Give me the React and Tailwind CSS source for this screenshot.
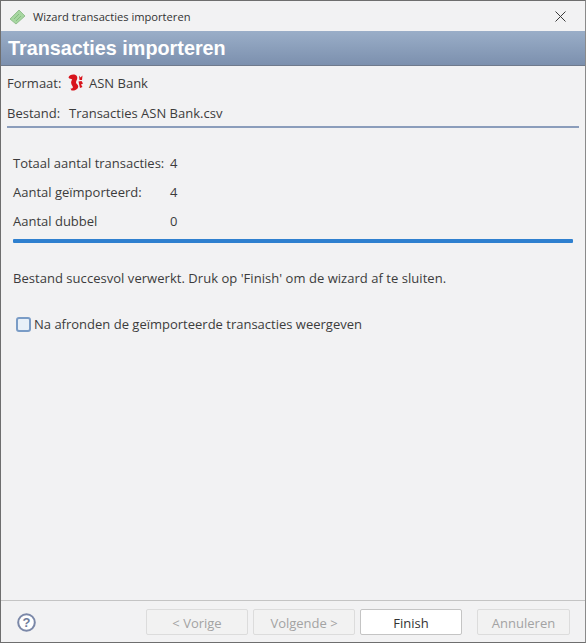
const font = { fontFamily: '"Open Sans", "Noto Sans", sans-serif' };

function WizardIcon() {
  return (
    <svg width="17" height="16" viewBox="0 0 17 16" className="shrink-0">
      <path d="M1 10 L10 1 L16 7 L7 15 Z" fill="#a6d6a0" stroke="#86b583" strokeWidth="0.8" />
      <path d="M5 10 L10 5 M7 12 L12 7" stroke="#7db67a" strokeWidth="0.8" />
    </svg>
  );
}

function SquirrelIcon() {
  return (
    <svg width="16" height="17" viewBox="0 0 16 17" className="shrink-0">
      <path d="M0.5 3.5 C1 0.5 7.5 -0.8 9 2.5 C10 5 8 6.5 8 8.5 C8.2 10 10 10.2 10.2 12.3 C10.4 15 7 17.2 3.5 16.4 L2.5 14.6 C4.5 14.8 5.6 13.5 4.4 12 C2.8 10 2.6 7.5 4.2 5.4 C3 4.6 1.5 5.4 0.5 3.5 Z" fill="#d8141c" />
      <path d="M11 1.5 L12.5 3.5 L14.5 1.5 L14 6 L11.5 6 Z M10.5 7.5 L13.5 7 L15 9.5 L13 10.5 L14.5 13 L12 14 Z" fill="#d8141c" />
    </svg>
  );
}

function WizardButton({ children, primary, wide }) {
  return (
    <button
      className={
        (wide ? "w-[102px] " : "w-[93px] ") +
        (primary
          ? "h-[26px] pt-[2px] bg-white border border-[#c4c4c4] rounded-[2px] text-[#333] text-[13px]"
          : "h-[26px] pt-[2px] bg-[#f2f2f2] border border-[#dcdcdc] rounded-[2px] text-[#a3a3a3] text-[13px]")
      }
    >
      {children}
    </button>
  );
}

function StatRow({ label, value }) {
  return (
    <div className="flex h-[29px] items-center">
      <span className="w-[157px]">{label}</span>
      <span>{value}</span>
    </div>
  );
}

export default function App() {
  return (
    <div
      style={font}
      className="w-[586px] h-[643px] flex flex-col bg-[#f2f2f3] border border-[#6e6e6e] border-r-[#8a8a8a] text-[13px] leading-[18px] text-[#3c3c3c] overflow-hidden"
    >
      <div className="h-[30px] shrink-0 flex items-center pl-[8px] pr-[19px] pt-[1px] text-[#333] text-[11.15px]">
        <WizardIcon />
        <span className="ml-[7px]">Wizard transacties importeren</span>
        <svg width="11" height="11" viewBox="0 0 11 11" className="ml-auto -mt-[1px]">
          <path d="M0.5 0.5 L10.5 10.5 M10.5 0.5 L0.5 10.5" stroke="#3a3a3a" strokeWidth="1" />
        </svg>
      </div>

      <div className="h-[35px] shrink-0 flex items-center pl-[7px] bg-gradient-to-b from-[#9aaec8] to-[#7c90ae] border-b border-[#6f7a8c]">
        <span className="text-white font-bold text-[19.8px]" style={{ fontFamily: '"Liberation Sans", sans-serif' }}>
          Transacties importeren
        </span>
      </div>

      <div className="flex h-[33px] items-center pl-[6px]">
        <span className="w-[61px]">Formaat:</span>
        <SquirrelIcon />
        <span className="ml-[5px]">ASN Bank</span>
      </div>
      <div className="flex h-[27px] items-center pl-[6px] mr-[6px] pt-[1px]">
        <span className="w-[62px]">Bestand:</span>
        <span>Transacties ASN Bank.csv</span>
      </div>
      <div className="h-[2px] shrink-0 bg-[#8b9dbb] mx-[6px]" />

      <div className="flex flex-col flex-1 px-[12px] pt-[20px]">
        <StatRow label="Totaal aantal transacties:" value="4" />
        <StatRow label="Aantal geïmporteerd:" value="4" />
        <StatRow label="Aantal dubbel" value="0" />
        <div className="h-1 mt-[4px] bg-[#2f80cf] rounded-[1px]" />
        <p className="mt-[26px] tracking-[0.04px]">Bestand succesvol verwerkt. Druk op 'Finish' om de wizard af te sluiten.</p>
        <label className="flex items-center mt-[28px] pl-[3px]">
          <span className="w-[15px] h-[15px] rounded-[3px] border-2 border-[#7a9cc6] bg-[#e8f0f8]" />
          <span className="ml-[3px]">Na afronden de geïmporteerde transacties weergeven</span>
        </label>
      </div>

      <div className="h-[42px] shrink-0 flex items-center border-t border-[#c4c4c4] pl-[16px] pr-[15px] pt-[1px]">
        <svg width="19" height="19" viewBox="0 0 19 19" className="shrink-0">
          <circle cx="9.5" cy="9.5" r="8.3" fill="#fff" stroke="#7b88a8" strokeWidth="2" />
          <text x="9.5" y="14" textAnchor="middle" fontSize="13" fontWeight="700" fill="#6f7c9c" fontFamily="Liberation Sans">?</text>
        </svg>
        <div className="flex ml-auto gap-[5px]">
          <WizardButton wide>&lt; Vorige</WizardButton>
          <WizardButton wide>Volgende &gt;</WizardButton>
          <WizardButton wide primary>Finish</WizardButton>
          <div className="w-[5px]" />
          <WizardButton>Annuleren</WizardButton>
        </div>
      </div>
    </div>
  );
}
